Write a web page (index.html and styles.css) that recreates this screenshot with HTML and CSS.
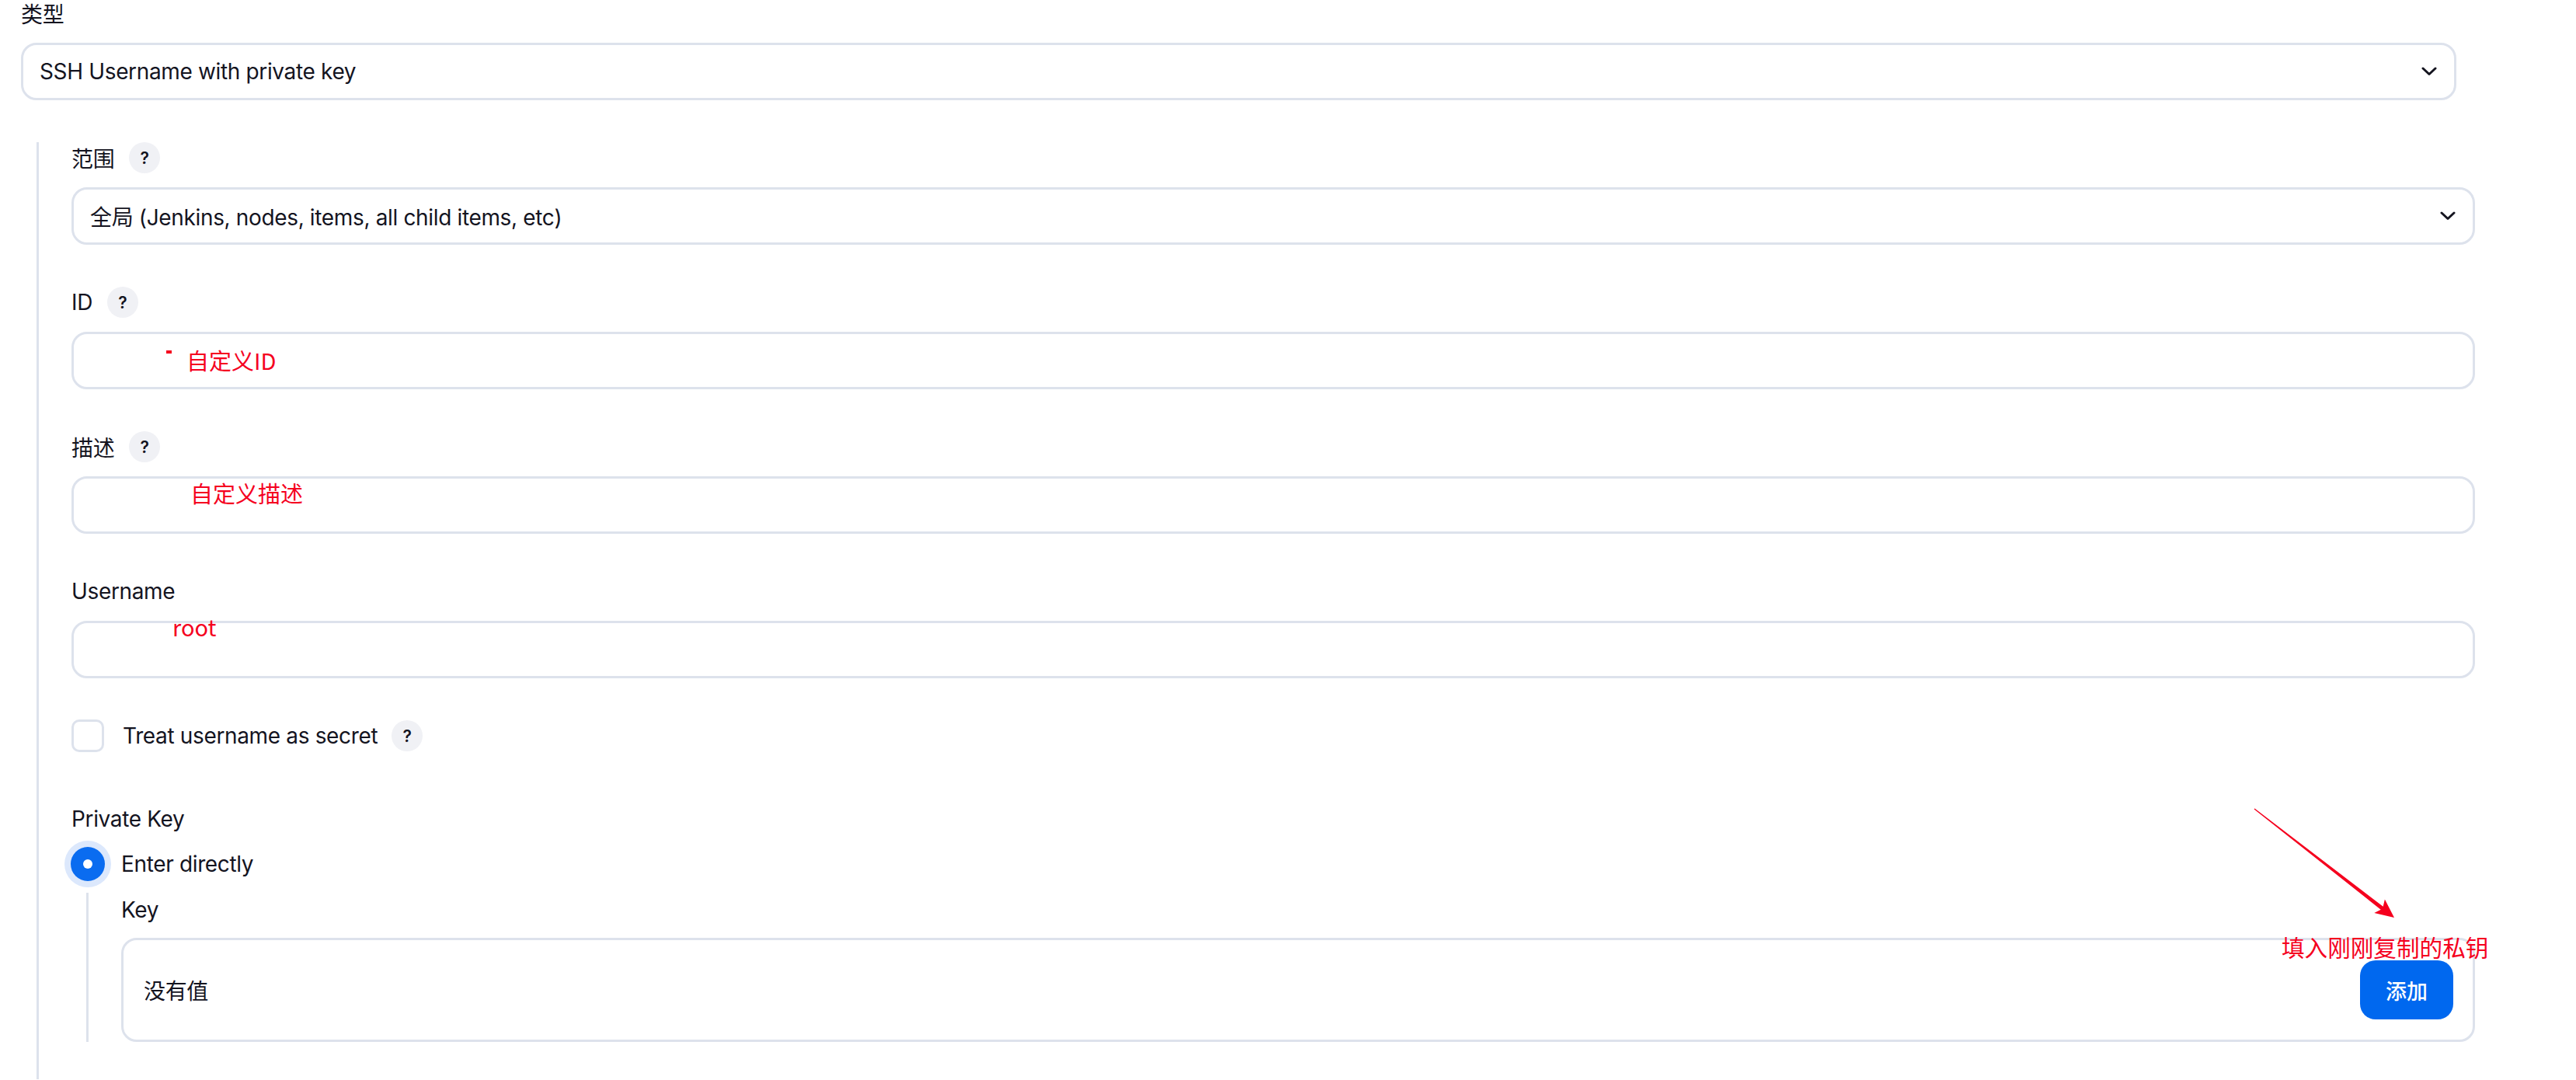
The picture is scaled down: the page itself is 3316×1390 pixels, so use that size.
FILE: index.html
```html
<!DOCTYPE html>
<html lang="zh-CN">
<head>
<meta charset="utf-8">
<title>SSH Username with private key</title>
<link rel="stylesheet" href="styles.css">
</head>
<body>
<div class="form">
  <div class="type-label">类型</div>
  <div class="select select-main">
    <span class="select-text">SSH Username with private key</span>
    <svg class="chevron" width="20" height="12" viewBox="0 0 20 12"><path d="M2 2 L10 9.5 L18 2" fill="none" stroke="#14141f" stroke-width="3" stroke-linecap="round" stroke-linejoin="round"/></svg>
  </div>

  <div class="nested">
    <div class="field">
      <div class="label-row"><span>范围</span><span class="help">?</span></div>
      <div class="select control">
        <span class="select-text">全局 (Jenkins, nodes, items, all child items, etc)</span>
        <svg class="chevron" width="20" height="12" viewBox="0 0 20 12"><path d="M2 2 L10 9.5 L18 2" fill="none" stroke="#14141f" stroke-width="3" stroke-linecap="round" stroke-linejoin="round"/></svg>
      </div>
    </div>

    <div class="field">
      <div class="label-row"><span>ID</span><span class="help">?</span></div>
      <div class="input control">
        <span class="mark dot"></span>
        <span class="mark note note-id">自定义ID</span>
      </div>
    </div>

    <div class="field">
      <div class="label-row"><span>描述</span><span class="help">?</span></div>
      <div class="input control">
        <span class="mark note note-desc">自定义描述</span>
      </div>
    </div>

    <div class="field">
      <div class="label-row"><span>Username</span></div>
      <div class="input control">
        <span class="mark note note-root">root</span>
      </div>
    </div>

    <div class="check-row">
      <span class="checkbox"></span>
      <span class="check-label">Treat username as secret</span>
      <span class="help">?</span>
    </div>

    <div class="label-row pk-label"><span>Private Key</span></div>
    <div class="radio-row">
      <span class="radio"><span class="radio-dot"></span></span>
      <span>Enter directly</span>
    </div>
    <div class="inner">
      <div class="label-row"><span>Key</span></div>
      <div class="keybox">
        <span>没有值</span>
        <button class="btn-add">添加</button>
        <svg class="mark arrow" width="195" height="155" viewBox="0 0 195 155"><polygon points="7.4,6.5 172.7,132.7 174.9,123.6 187,147 161.3,141 169.7,136.7 6.6,7.5" fill="#f5001e"/></svg>
        <span class="mark note note-key">填入刚刚复制的私钥</span>
      </div>
    </div>
  </div>
</div>
</body>
</html>
```

FILE: styles.css
```css
html, body {
  margin: 0;
  padding: 0;
  background: #ffffff;
  overflow: hidden;
}
body {
  font-family: Inter, "Noto Sans CJK SC", sans-serif;
  font-size: 28px;
  letter-spacing: -0.35px;
  color: #14141f;
  height: 1390px;
}
.form {
  padding-left: 27px;
}
.type-label {
  height: 38px;
  line-height: 38px;
}
.select {
  box-sizing: border-box;
  height: 74px;
  border: 3px solid #dde2ec;
  border-radius: 20px;
  background: #fff;
  display: flex;
  align-items: center;
  justify-content: space-between;
  padding: 0 22px 0 21px;
}
.select-main {
  width: 3135px;
  margin-top: 17px;
}
.chevron {
  display: block;
}
.nested {
  margin-top: 54px;
  margin-left: 20px;
  border-left: 3px solid #dde2ec;
  padding-left: 42px;
  width: 3094px;
  padding-bottom: 48px;
}
.field + .field {
  margin-top: 54px;
}
.label-row {
  display: flex;
  align-items: center;
  gap: 19px;
  height: 40px;
}
.help {
  width: 40px;
  height: 40px;
  border-radius: 50%;
  background: #f0f1f5;
  display: inline-flex;
  align-items: center;
  justify-content: center;
  font-family: Inter, sans-serif;
  font-size: 21px;
  font-weight: 600;
  letter-spacing: 0;
  color: #14141f;
}
.control {
  margin-top: 18px;
}
.input {
  box-sizing: border-box;
  height: 74px;
  border: 3px solid #dde2ec;
  border-radius: 20px;
  background: #fff;
  position: relative;
}
.mark {
  position: absolute;
}
.note {
  font-family: "Noto Sans CJK SC", sans-serif;
  font-size: 29px;
  letter-spacing: 0;
  line-height: 1;
  color: #f5001e;
  white-space: nowrap;
}
.dot {
  left: 119px;
  top: 21px;
  width: 7px;
  height: 4px;
  background: #f5001e;
}
.note-id {
  left: 145px;
  top: 19px;
}
.note-desc {
  left: 150px;
  top: 4px;
}
.note-root {
  left: 127px;
  top: -10px;
}
.check-row {
  margin-top: 53px;
  display: flex;
  align-items: center;
  height: 42px;
}
.checkbox {
  box-sizing: border-box;
  width: 42px;
  height: 42px;
  border: 3px solid #dde2ec;
  border-radius: 10px;
  background: #fff;
}
.check-label {
  margin-left: 24px;
  margin-right: 18px;
}
.pk-label {
  margin-top: 66px;
}
.radio-row {
  margin-top: 16px;
  display: flex;
  align-items: center;
  gap: 21px;
  height: 44px;
  margin-left: -1px;
}
.radio {
  width: 44px;
  height: 44px;
  border-radius: 50%;
  background: #0a6cf0;
  box-shadow: 0 0 0 8px #dce8fc;
  display: flex;
  align-items: center;
  justify-content: center;
}
.radio-dot {
  width: 12px;
  height: 12px;
  border-radius: 50%;
  background: #fff;
}
.inner {
  margin-top: 15px;
  margin-left: 19px;
  border-left: 3px solid #dde2ec;
  padding-left: 42px;
  padding-top: 2px;
}
.keybox {
  position: relative;
  box-sizing: border-box;
  margin-top: 16px;
  height: 134px;
  border: 3px solid #dde2ec;
  border-radius: 20px;
  display: flex;
  align-items: center;
  justify-content: space-between;
  padding: 0 25px 0 26px;
}
.btn-add {
  width: 120px;
  height: 76px;
  border: none;
  border-radius: 20px;
  background: #0068ef;
  color: #fff;
  font-family: Inter, "Noto Sans CJK SC", sans-serif;
  font-size: 27px;
  font-weight: 500;
  letter-spacing: 0;
  padding: 0;
}
.arrow {
  left: 2736px;
  top: -176px;
}
.note-key {
  left: 2778px;
  top: -6px;
  font-size: 29.6px;
}
```
